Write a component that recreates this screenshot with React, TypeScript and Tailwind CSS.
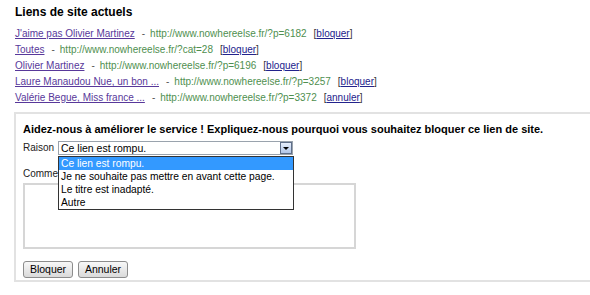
const links = [
  { title: "J'aime pas Olivier Martinez", url: "http://www.nowhereelse.fr/?p=6182", action: "bloquer" },
  { title: "Toutes", url: "http://www.nowhereelse.fr/?cat=28", action: "bloquer" },
  { title: "Olivier Martinez", url: "http://www.nowhereelse.fr/?p=6196", action: "bloquer" },
  { title: "Laure Manaudou Nue, un bon ...", url: "http://www.nowhereelse.fr/?p=3257", action: "bloquer" },
  { title: "Valérie Begue, Miss france ...", url: "http://www.nowhereelse.fr/?p=3372", action: "annuler" },
];

const reasons = [
  "Ce lien est rompu.",
  "Je ne souhaite pas mettre en avant cette page.",
  "Le titre est inadapté.",
  "Autre",
];

export default function App() {
  return (
    <div className="w-[590px] h-[295px] overflow-hidden bg-white pl-[14px] pt-[5px] font-['Liberation_Sans',Arial,sans-serif] text-[#111]">
      <h2 className="pl-px text-[12px] leading-[14px] font-bold text-black">Liens de site actuels</h2>

      <ul className="mt-[7px] pl-px text-[10px] leading-[16px]">
        {links.map((link, i) => (
          <li key={i} className="flex whitespace-nowrap">
            <a className="text-[#58389a] underline">{link.title}</a>
            <span className="ml-[7px] mr-[5px] text-[#555]">-</span>
            <span className="text-[#4f8f4f]">{link.url}</span>
            <span className="ml-[7px] text-[#333]">
              [<a className="text-[#23238c] underline">{link.action}</a>]
            </span>
          </li>
        ))}
      </ul>

      <div className="mt-[6px] w-[600px] h-[170px] border-2 border-[#e2e2e2] pl-[7px] pt-[8px]">
        <p className="text-[11px] leading-[14px] font-bold text-black whitespace-nowrap">
          Aidez-nous à améliorer le service ! Expliquez-nous pourquoi vous souhaitez bloquer ce lien de site.
        </p>

        <div className="mt-[5px] flex items-center text-[10px] leading-[14px]">
          <span className="w-[35px] text-[#222]">Raison</span>
          <div className="relative z-10">
            <div className="flex h-[14px] w-[235px] items-center border border-[#9aa3ad] bg-white">
              <span className="flex-1 pl-[2px] text-[10.5px] leading-[12px] text-black">Ce lien est rompu.</span>
              <div className="flex h-[12px] w-[12px] items-center justify-center border border-[#5f6f8a] bg-gradient-to-b from-[#e6eefb] to-[#b2c6e8]">
                <div className="h-0 w-0 border-x-[3px] border-t-[3px] border-x-transparent border-t-black" />
              </div>
            </div>
            <ul className="absolute left-0 top-[15px] w-[236px] border border-[#333] bg-white text-[10.25px] leading-[13px]">
              {reasons.map((r, i) => (
                <li
                  key={i}
                  className={i === 0 ? "bg-[#3399ff] pl-[2px] text-white" : "pl-[2px] text-black"}
                >
                  {r}
                </li>
              ))}
            </ul>
          </div>
        </div>

        <div className="mt-[12px] text-[10px] leading-[14px] text-[#222]">Commentaire</div>
        <textarea className="mt-[2px] block h-[66px] w-[333px] resize-none border-2 border-[#d6d6d6] outline-none" />

        <div className="mt-[12px] flex gap-[5px]">
          <button className="h-[17px] w-[50px] rounded-[3px] border border-[#8c8c8c] bg-gradient-to-b from-[#f8f8f8] to-[#dadada] text-[10.5px] leading-[15px] text-black">
            Bloquer
          </button>
          <button className="h-[17px] w-[50px] rounded-[3px] border border-[#8c8c8c] bg-gradient-to-b from-[#f8f8f8] to-[#dadada] text-[10.5px] leading-[15px] text-black">
            Annuler
          </button>
        </div>
      </div>
    </div>
  );
}
